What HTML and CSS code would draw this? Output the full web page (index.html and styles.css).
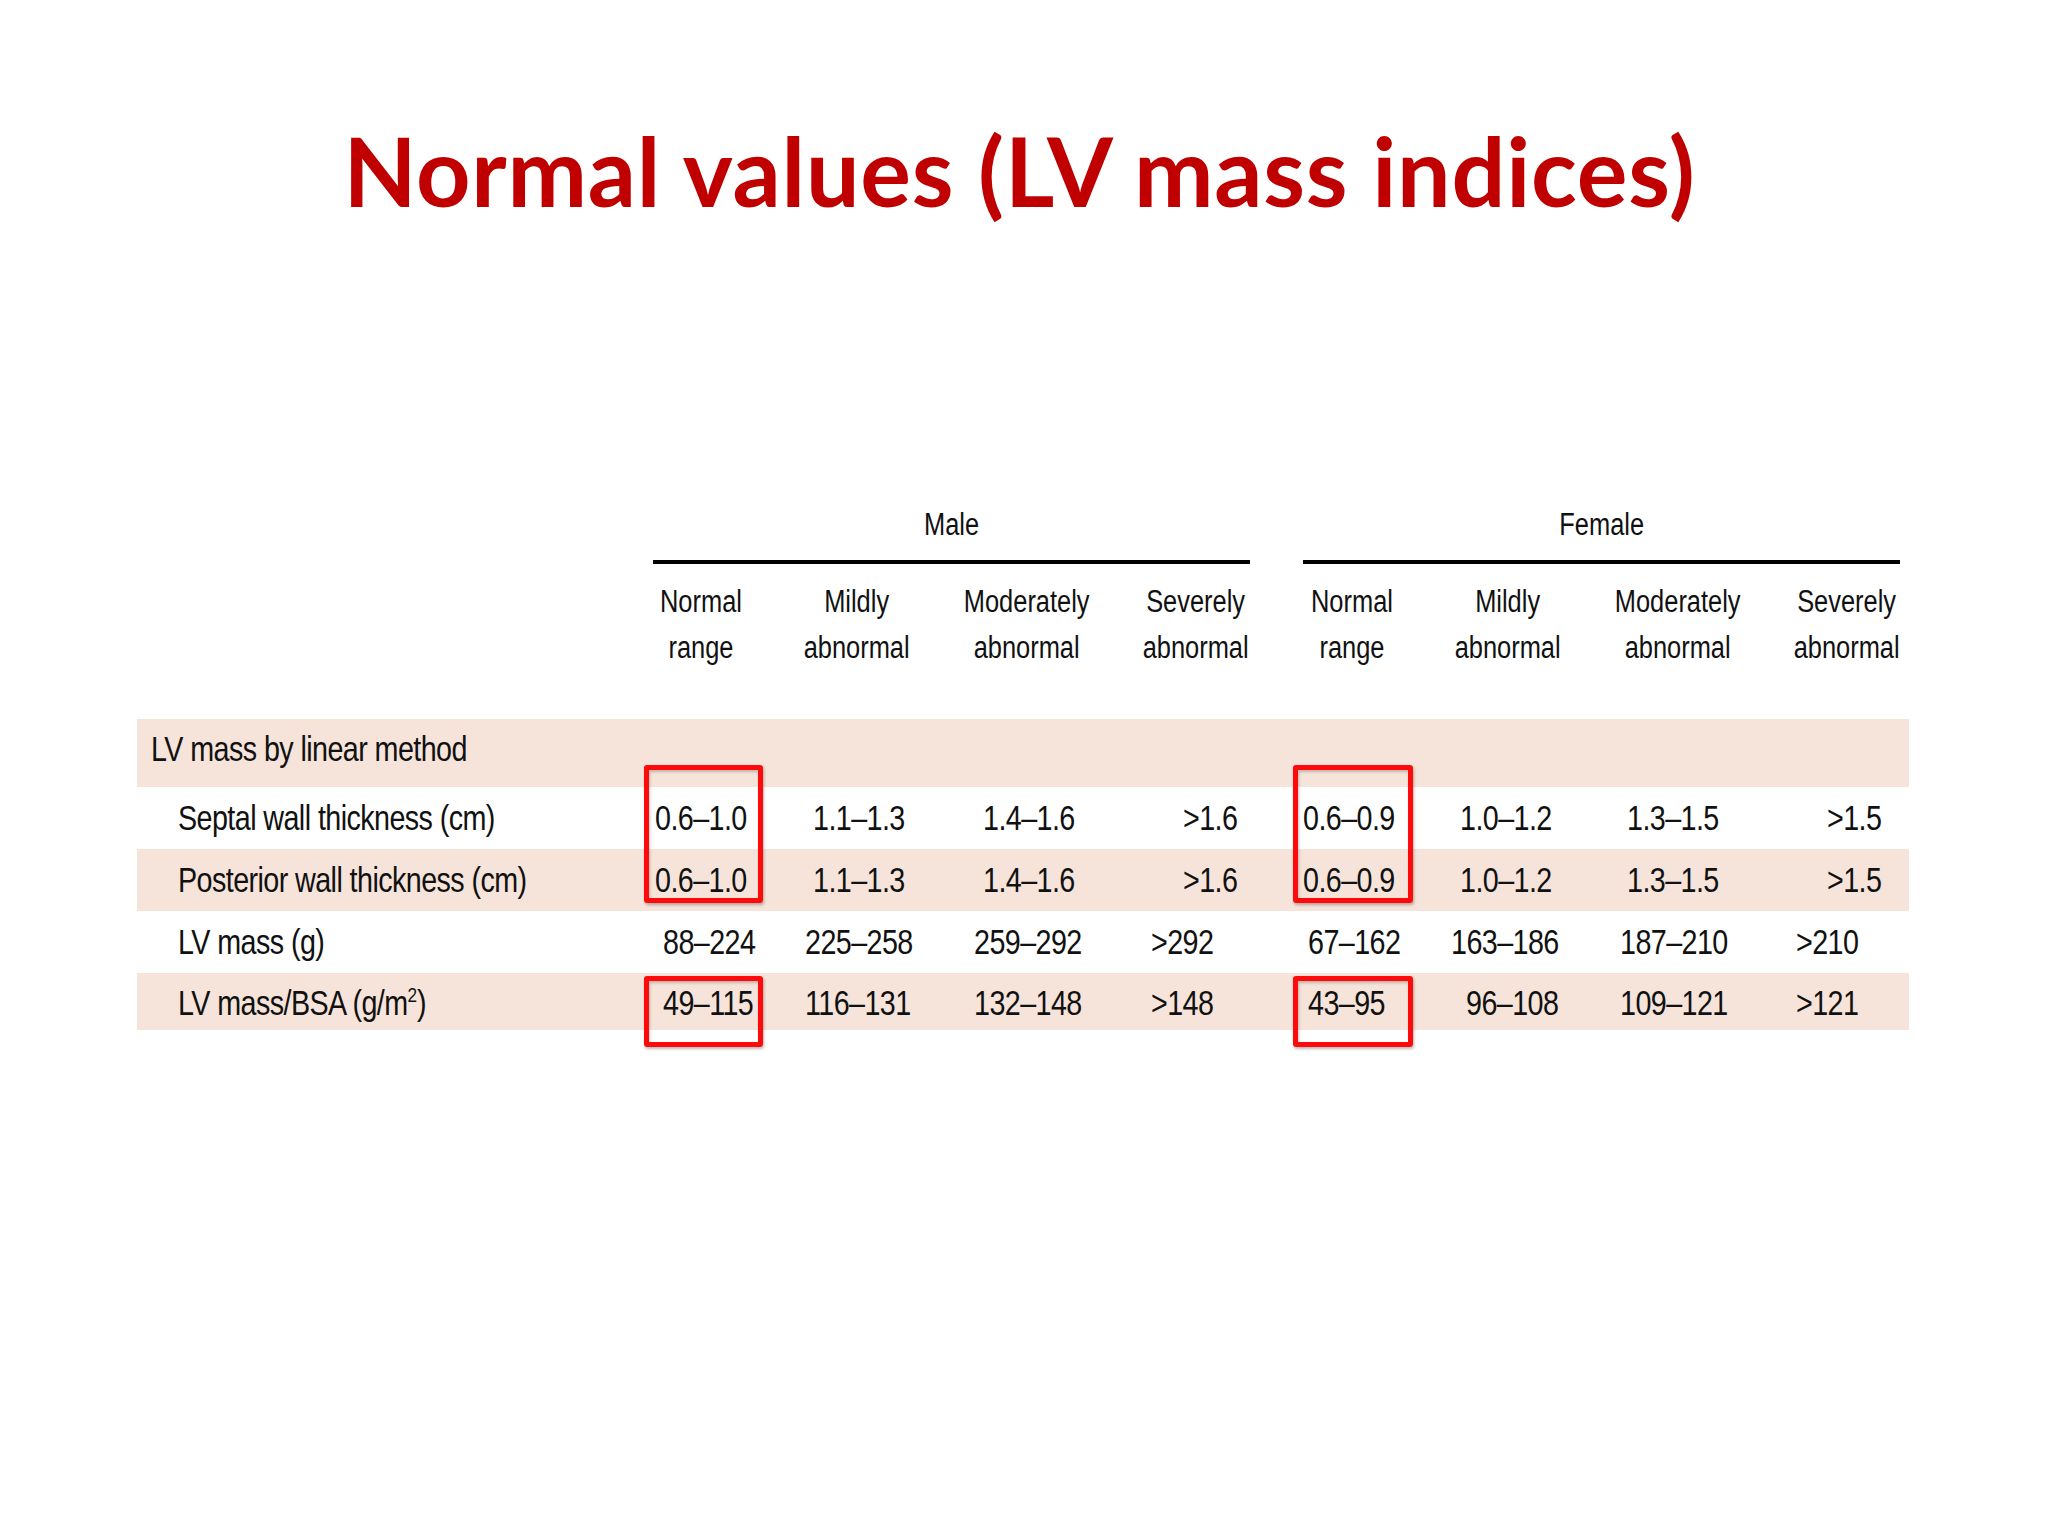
FILE: index.html
```html
<!DOCTYPE html>
<html lang="en">
<head>
<meta charset="utf-8">
<title>Normal values (LV mass indices)</title>
<link rel="stylesheet" href="styles.css">
</head>
<body>
<div class="slide">
  <h1 class="title">Normal values (LV mass indices)</h1>
  <div class="tbl">
    <div class="row grp-head">
      <div class="grp span-m"><span class="t">Male</span></div>
      <div class="grp span-f"><span class="t">Female</span></div>
    </div>
    <div class="row col-head">
      <div class="cell m1"><span class="t">Normal<br>range</span></div>
      <div class="cell m2"><span class="t">Mildly<br>abnormal</span></div>
      <div class="cell m3"><span class="t">Moderately<br>abnormal</span></div>
      <div class="cell m4"><span class="t">Severely<br>abnormal</span></div>
      <div class="cell f1"><span class="t">Normal<br>range</span></div>
      <div class="cell f2"><span class="t">Mildly<br>abnormal</span></div>
      <div class="cell f3"><span class="t">Moderately<br>abnormal</span></div>
      <div class="cell f4"><span class="t">Severely<br>abnormal</span></div>
    </div>
    <div class="body">
      <div class="row data band group">
        <div class="cell grp-label"><span class="t">LV mass by linear method</span></div>
      </div>
      <div class="row data dec">
        <div class="cell lab"><span class="t">Septal wall thickness (cm)</span></div>
        <div class="cell m1"><span class="t">0.6–1.0</span></div>
        <div class="cell m2"><span class="t">1.1–1.3</span></div>
        <div class="cell m3"><span class="t">1.4–1.6</span></div>
        <div class="cell m4"><span class="t">&gt;1.6</span></div>
        <div class="cell f1"><span class="t">0.6–0.9</span></div>
        <div class="cell f2"><span class="t">1.0–1.2</span></div>
        <div class="cell f3"><span class="t">1.3–1.5</span></div>
        <div class="cell f4"><span class="t">&gt;1.5</span></div>
      </div>
      <div class="row data band dec">
        <div class="cell lab"><span class="t">Posterior wall thickness (cm)</span></div>
        <div class="cell m1"><span class="t">0.6–1.0</span></div>
        <div class="cell m2"><span class="t">1.1–1.3</span></div>
        <div class="cell m3"><span class="t">1.4–1.6</span></div>
        <div class="cell m4"><span class="t">&gt;1.6</span></div>
        <div class="cell f1"><span class="t">0.6–0.9</span></div>
        <div class="cell f2"><span class="t">1.0–1.2</span></div>
        <div class="cell f3"><span class="t">1.3–1.5</span></div>
        <div class="cell f4"><span class="t">&gt;1.5</span></div>
      </div>
      <div class="row data int">
        <div class="cell lab"><span class="t">LV mass (g)</span></div>
        <div class="cell m1"><span class="t">88–224</span></div>
        <div class="cell m2"><span class="t">225–258</span></div>
        <div class="cell m3"><span class="t">259–292</span></div>
        <div class="cell m4"><span class="t">&gt;292</span></div>
        <div class="cell f1"><span class="t">67–162</span></div>
        <div class="cell f2"><span class="t">163–186</span></div>
        <div class="cell f3"><span class="t">187–210</span></div>
        <div class="cell f4"><span class="t">&gt;210</span></div>
      </div>
      <div class="row data band int last">
        <div class="cell lab"><span class="t">LV mass/BSA (g/m<sup>2</sup>)</span></div>
        <div class="cell m1"><span class="t">49–115</span></div>
        <div class="cell m2"><span class="t">116–131</span></div>
        <div class="cell m3"><span class="t">132–148</span></div>
        <div class="cell m4"><span class="t">&gt;148</span></div>
        <div class="cell f1"><span class="t">43–95</span></div>
        <div class="cell f2 wide"><span class="t">96–108</span></div>
        <div class="cell f3"><span class="t">109–121</span></div>
        <div class="cell f4"><span class="t">&gt;121</span></div>
      </div>
    </div>
    <div class="box box-m-top"></div>
    <div class="box box-m-bot"></div>
    <div class="box box-f-top"></div>
    <div class="box box-f-bot"></div>
  </div>
</div>
</body>
</html>
```

FILE: styles.css
```css
html, body {
  margin: 0;
  padding: 0;
  background: #ffffff;
}

.slide {
  width: 2048px;
  height: 1536px;
  padding-top: 114px;
  box-sizing: border-box;
  overflow: hidden;
}

.title {
  margin: 0;
  padding-right: 9px;
  font-family: Lato, "Open Sans", sans-serif;
  font-weight: 700;
  font-size: 95px;
  letter-spacing: 0.77px;
  line-height: 112px;
  color: #c00000;
  text-align: center;
}

.tbl {
  position: relative;
  margin: 281px 0 0 137px;
  width: 1772px;
  font-family: "Liberation Sans", Arial, sans-serif;
  color: #111111;
}

/* condensed look: Helvetica-Narrow-like glyphs */
.t {
  display: inline-block;
  transform: scaleX(0.82);
  transform-origin: left center;
  white-space: nowrap;
}

.row {
  display: grid;
  grid-template-columns: 516px 126px 163px 169px 139px 53px 127px 163px 170px 137px 9px;
}

/* group header (Male / Female) */
.grp {
  font-size: 31px;
  line-height: 36px;
  padding-bottom: 17px;
  border-bottom: 4px solid #000000;
  text-align: center;
}
.grp .t { transform-origin: center; vertical-align: top; }
.span-m { grid-column: 2 / 6; }
.span-f { grid-column: 7 / 11; }

/* column header */
.col-head {
  margin-top: 15px;
  font-size: 31px;
  line-height: 46px;
}
.col-head .cell {
  display: flex;
  justify-content: center;
  align-items: flex-start;
}
.col-head .t { transform-origin: center top; text-align: center; flex: none; }

.m1 { grid-column: 2; }
.m2 { grid-column: 3; }
.m3 { grid-column: 4; }
.m4 { grid-column: 5; }
.f1 { grid-column: 7; }
.f2 { grid-column: 8; }
.f3 { grid-column: 9; }
.f4 { grid-column: 10; }
.lab { grid-column: 1; padding-left: 41px; }

.col-head .m1 { padding-right: 30px; }
.col-head .m2 { padding-right: 7px; }
.col-head .m4 { padding-left: 31px; }
.col-head .f1 { padding-right: 29px; }
.col-head .f2 { padding-right: 7px; }
.col-head .f4 { padding-left: 31px; }

/* body */
.body {
  margin-top: 48px;
}

.data {
  font-size: 35px;
  letter-spacing: -0.7px;
  height: 62px;
  line-height: 62px;
  white-space: nowrap;
}
.data .t { vertical-align: top; }

.band {
  background: #f6e4da;
}

.group {
  height: 68px;
  line-height: 52px;
  padding-top: 4px;
  box-sizing: border-box;
}
.grp-label {
  grid-column: 1 / -1;
  padding-left: 14px;
}

.last {
  height: 57px;
  line-height: 55px;
  padding-top: 2px;
  box-sizing: border-box;
}

sup {
  font-size: 21px;
  line-height: 0;
  vertical-align: 13px;
  letter-spacing: 0;
}

/* value placement: decimal rows */
.dec .m1 { padding-left: 2px; }
.dec .m2 { padding-left: 34px; }
.dec .m3 { padding-left: 41px; }
.dec .m4 { padding-left: 72px; }
.dec .f1 { padding-left: 0; }
.dec .f2 { padding-left: 30px; }
.dec .f3 { padding-left: 34px; }
.dec .f4 { padding-left: 64px; }

/* value placement: integer rows */
.int .m1 { padding-left: 10px; }
.int .m2 { padding-left: 26px; }
.int .m3 { padding-left: 32px; }
.int .m4 { padding-left: 40px; }
.int .f1 { padding-left: 5px; }
.int .f2 { padding-left: 21px; }
.int .f2.wide { padding-left: 36px; }
.int .f3 { padding-left: 27px; }
.int .f4 { padding-left: 33px; }

/* red highlight boxes (overlay) */
.box {
  position: absolute;
  box-sizing: border-box;
  border: 5px solid #ff0a0a;
  border-radius: 3px;
  box-shadow: 1px 2px 3px rgba(0, 0, 0, 0.28), inset 1px 2px 3px rgba(0, 0, 0, 0.22);
}
.box-m-top { left: 507px; top: 258px; width: 119px; height: 138px; }
.box-m-bot { left: 507px; top: 469px; width: 119px; height: 71px; }
.box-f-top { left: 1156px; top: 258px; width: 120px; height: 138px; }
.box-f-bot { left: 1156px; top: 469px; width: 120px; height: 71px; }
```
